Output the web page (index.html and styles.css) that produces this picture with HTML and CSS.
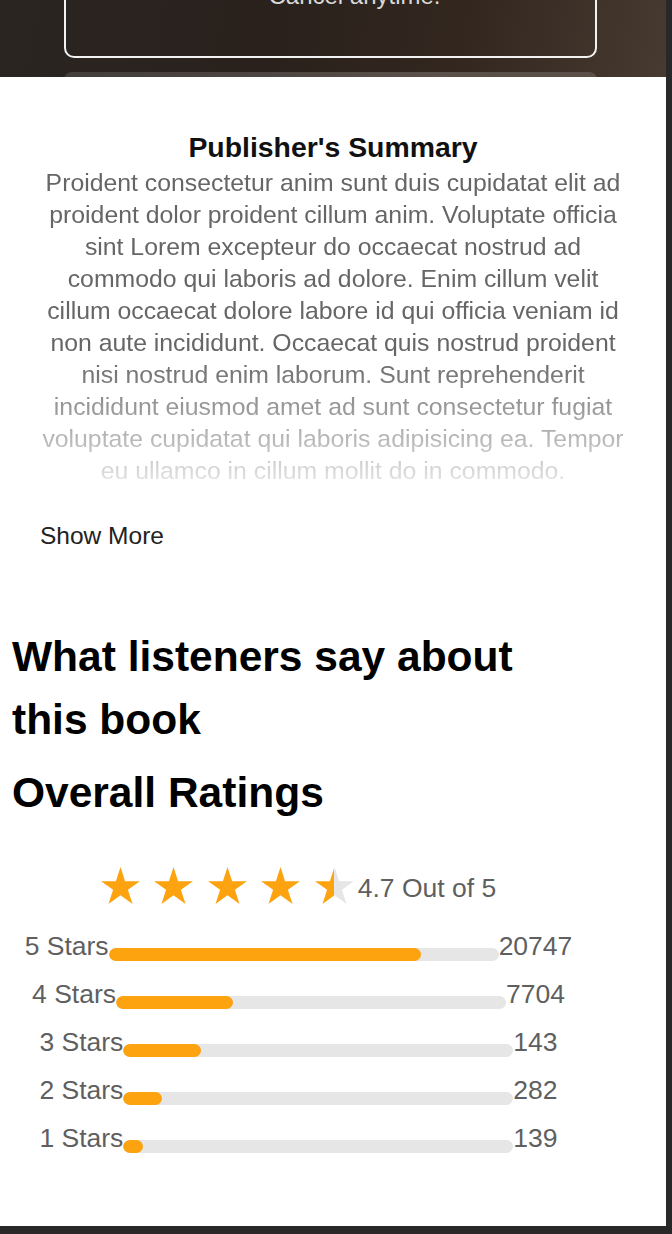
FILE: index.html
```html
<!DOCTYPE html>
<html lang="en">
<head>
<meta charset="utf-8">
<title>Publisher's Summary</title>
<link rel="stylesheet" href="styles.css">
</head>
<body>
<div class="page">
  <header class="promo">
    <div class="promo-box"><p class="promo-text">Cancel anytime.</p></div>
    <div class="promo-next"></div>
  </header>

  <section class="summary">
    <h2 class="summary-title">Publisher's Summary</h2>
    <p class="summary-text">Proident consectetur anim sunt duis cupidatat elit ad proident dolor proident cillum anim. Voluptate officia sint Lorem excepteur do occaecat nostrud ad commodo qui laboris ad dolore. Enim cillum velit cillum occaecat dolore labore id qui officia veniam id non aute incididunt. Occaecat quis nostrud proident nisi nostrud enim laborum. Sunt reprehenderit incididunt eiusmod amet ad sunt consectetur fugiat voluptate cupidatat qui laboris adipisicing ea. Tempor eu ullamco in cillum mollit do in commodo.</p>
    <button class="show-more" type="button">Show More</button>
  </section>

  <section class="reviews">
    <h2 class="reviews-title">What listeners say about this book</h2>
    <h3 class="ratings-title">Overall Ratings</h3>

    <div class="stars-row">
      <div class="stars">
        <svg class="star" viewBox="-0.951 -1 1.902 1.809"><polygon fill="#fca30f" points="0,-1 0.2245,-0.309 0.951,-0.309 0.363,0.118 0.588,0.809 0,0.382 -0.588,0.809 -0.363,0.118 -0.951,-0.309 -0.2245,-0.309"/></svg>
        <svg class="star" viewBox="-0.951 -1 1.902 1.809"><polygon fill="#fca30f" points="0,-1 0.2245,-0.309 0.951,-0.309 0.363,0.118 0.588,0.809 0,0.382 -0.588,0.809 -0.363,0.118 -0.951,-0.309 -0.2245,-0.309"/></svg>
        <svg class="star" viewBox="-0.951 -1 1.902 1.809"><polygon fill="#fca30f" points="0,-1 0.2245,-0.309 0.951,-0.309 0.363,0.118 0.588,0.809 0,0.382 -0.588,0.809 -0.363,0.118 -0.951,-0.309 -0.2245,-0.309"/></svg>
        <svg class="star" viewBox="-0.951 -1 1.902 1.809"><polygon fill="#fca30f" points="0,-1 0.2245,-0.309 0.951,-0.309 0.363,0.118 0.588,0.809 0,0.382 -0.588,0.809 -0.363,0.118 -0.951,-0.309 -0.2245,-0.309"/></svg>
        <svg class="star" viewBox="-0.951 -1 1.902 1.809">
          <defs>
            <linearGradient id="half" x1="0" x2="1" y1="0" y2="0">
              <stop offset="0.5" stop-color="#fca30f"/>
              <stop offset="0.5" stop-color="#e6e6e6"/>
            </linearGradient>
          </defs>
          <polygon fill="url(#half)" points="0,-1 0.2245,-0.309 0.951,-0.309 0.363,0.118 0.588,0.809 0,0.382 -0.588,0.809 -0.363,0.118 -0.951,-0.309 -0.2245,-0.309"/>
        </svg>
      </div>
      <span class="stars-score">4.7 Out of 5</span>
    </div>

    <div class="bars">
      <div class="bar-row"><span class="bar-label">5 Stars</span><span class="bar-track"><span class="bar-fill" style="width:80%"></span></span><span class="bar-count">20747</span></div>
      <div class="bar-row"><span class="bar-label">4 Stars</span><span class="bar-track"><span class="bar-fill" style="width:30%"></span></span><span class="bar-count">7704</span></div>
      <div class="bar-row"><span class="bar-label">3 Stars</span><span class="bar-track"><span class="bar-fill" style="width:20%"></span></span><span class="bar-count">143</span></div>
      <div class="bar-row"><span class="bar-label">2 Stars</span><span class="bar-track"><span class="bar-fill" style="width:10%"></span></span><span class="bar-count">282</span></div>
      <div class="bar-row"><span class="bar-label">1 Stars</span><span class="bar-track"><span class="bar-fill" style="width:5%"></span></span><span class="bar-count">139</span></div>
    </div>
  </section>
</div>
</body>
</html>
```

FILE: styles.css
```css
* { box-sizing: border-box; }

html, body {
  margin: 0;
  padding: 0;
  background: #282828;
}

body {
  font-family: "Liberation Sans", Arial, sans-serif;
}

.page {
  width: 666px;
  height: 1226px;
  background: #ffffff;
  overflow: hidden;
}

/* ---------- promo header ---------- */
.promo {
  height: 77px;
  overflow: hidden;
  background: linear-gradient(100deg, #2a2522 0%, #2a211c 40%, #33271f 70%, #473a31 100%);
  padding: 0 69px 0 64px;
}

.promo-box {
  margin-top: -60px;
  height: 118px;
  border: 2px solid #f2f2f2;
  border-radius: 10px;
  padding: 40px 0 0 48px;
  text-align: center;
}

.promo-text {
  margin: 0;
  font-size: 24px;
  line-height: 28px;
  color: #d9d9d9;
}

.promo-next {
  margin-top: 14px;
  height: 30px;
  border-radius: 8px 8px 0 0;
  background: linear-gradient(90deg, rgba(255,255,255,0.12), rgba(255,255,255,0.2) 70%, rgba(255,255,255,0.14));
}

/* ---------- summary ---------- */
.summary {
  padding: 52px 38px 0;
}

.summary-title {
  margin: 0;
  text-align: center;
  font-size: 28.4px;
  line-height: 36px;
  font-weight: 700;
  color: #111;
}

.summary-text {
  margin: 2px 0 0;
  text-align: center;
  font-size: 24.8px;
  line-height: 32px;
  color: #666;
  -webkit-mask-image: linear-gradient(to bottom, #000 190px, rgba(0,0,0,0.15) 320px);
  mask-image: linear-gradient(to bottom, #000 190px, rgba(0,0,0,0.15) 320px);
}

.show-more {
  display: block;
  margin: 35px 0 0 2px;
  padding: 0;
  border: 0;
  background: none;
  font-family: inherit;
  font-size: 24.5px;
  line-height: 28px;
  color: #222;
  cursor: pointer;
}

/* ---------- reviews ---------- */
.reviews {
  width: 597px;
  padding: 0 12px;
  margin-top: 75px;
}

.reviews-title,
.ratings-title {
  margin: 0;
  font-size: 42.5px;
  line-height: 63px;
  font-weight: 700;
  color: #000;
}

.ratings-title {
  margin-top: 10px;
}

.stars-row {
  margin-top: 43px;
  display: flex;
  justify-content: center;
  align-items: flex-end;
  gap: 4px;
}

.stars {
  display: flex;
  gap: 14.5px;
}

.star {
  display: block;
  width: 39px;
  height: 37px;
}

.stars-score {
  font-size: 26.5px;
  line-height: 31px;
  color: #5f5f5f;
}

.bars {
  margin-top: 27px;
  display: flex;
  flex-direction: column;
  gap: 17px;
}

.bar-row {
  display: flex;
  justify-content: center;
  align-items: flex-end;
  font-size: 26.5px;
  line-height: 31px;
  color: #5f5f5f;
}

.bar-track {
  width: 390px;
  height: 13px;
  border-radius: 7px;
  background: #e6e6e6;
  overflow: hidden;
  margin-bottom: 1px;
}

.bar-fill {
  display: block;
  height: 100%;
  border-radius: 7px;
  background: #fca30f;
}
```
